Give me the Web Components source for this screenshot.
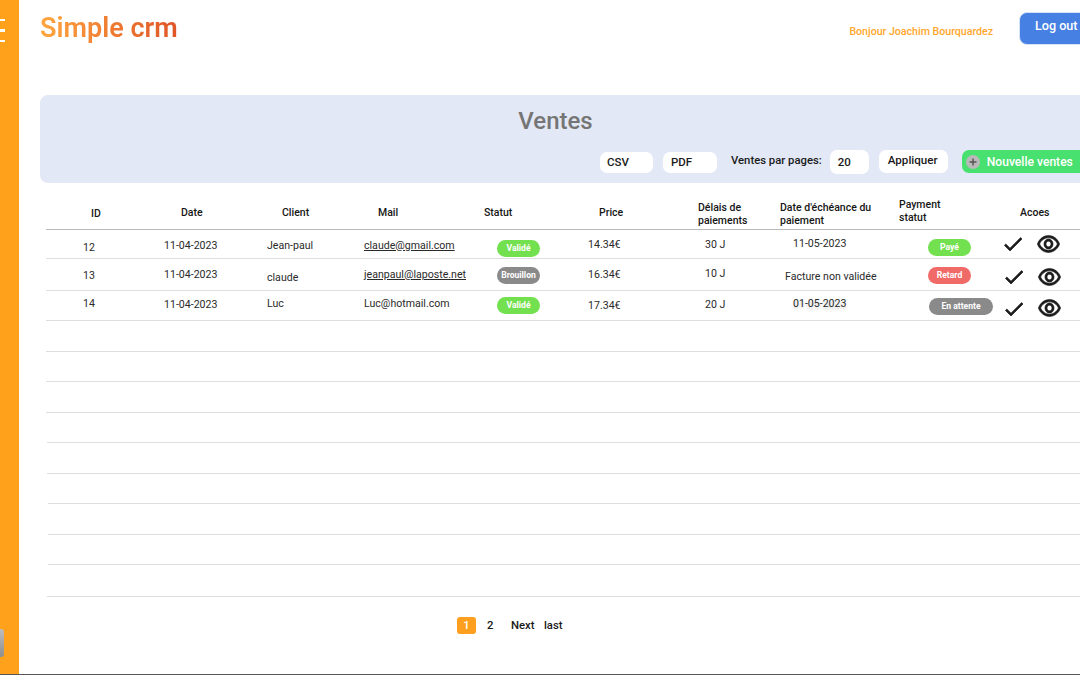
<!DOCTYPE html>
<html lang="fr">
<head>
<meta charset="utf-8">
<title>Simple crm</title>
<style>
  html, body { margin: 0; height: 100%; overflow: hidden; background: #fff; }
  body { font-family: Roboto, "Liberation Sans", sans-serif; color: #1f1f1f; }
</style>
</head>
<body>
<crm-app>
  <crm-header slot="header" user="Bonjour Joachim Bourquardez"></crm-header>
  <crm-toolbar slot="toolbar" title="Ventes"></crm-toolbar>
  <crm-table slot="table"></crm-table>
  <crm-pagination slot="pager"></crm-pagination>
</crm-app>

<script>
// App shell: orange rail on the left, content on the right
class CrmApp extends HTMLElement {
  constructor() {
    super();
    this.attachShadow({ mode: "open" }).innerHTML = `
      <style>
        :host { display: flex; width: 1080px; height: 675px; position: relative; overflow: hidden; box-sizing: border-box; border-bottom: 1px solid #555; }
        .rail { width: 19px; flex: none; background: #ffa11a; display: flex; flex-direction: column; gap: 8px; padding-top: 19px; box-sizing: border-box; }
        .rail i { display: block; width: 5px; height: 2.4px; background: #fff; }
        .tab { position: absolute; left: 0; top: 629px; width: 4px; height: 28px; border-radius: 0 3px 3px 0; background: linear-gradient(#bdbdbd, #8f8f8f); }
        main { width: 1061px; flex: none; padding-left: 21px; box-sizing: border-box; display: flex; flex-direction: column; }
      </style>
      <div class="rail"><i></i><i></i><i></i></div>
      <div class="tab"></div>
      <main>
        <slot name="header"></slot>
        <slot name="toolbar"></slot>
        <slot name="table"></slot>
        <slot name="pager"></slot>
      </main>`;
  }
}

class CrmHeader extends HTMLElement {
  constructor() {
    super();
    this.attachShadow({ mode: "open" });
  }
  connectedCallback() {
    this.shadowRoot.innerHTML = `
      <style>
        :host { display: flex; height: 95px; width: 1049px; box-sizing: border-box; padding-top: 12px; align-items: flex-start; }
        h1 { margin: 0; font-size: 27px; line-height: 32px; font-weight: 600; background: linear-gradient(90deg, #ffa63f, #df5527); -webkit-background-clip: text; background-clip: text; color: transparent; }
        .hello { margin-left: auto; margin-top: 13px; font-size: 10.6px; line-height: 13px; font-weight: 500; color: #ffa62b; }
        button { margin-left: 26px; width: 70px; height: 33px; border: 1px solid #d6e2f7; border-radius: 8px; background: #4680e2; color: #fff; font: 500 12.6px/1 Roboto, sans-serif; text-align: left; padding: 0 0 4px 15px; }
      </style>
      <h1>Simple crm</h1>
      <span class="hello">${this.getAttribute("user")}</span>
      <button>Log out</button>`;
  }
}

class CrmField extends HTMLElement {
  constructor() {
    super();
    this.attachShadow({ mode: "open" }).innerHTML = `
      <style>
        :host { display: flex; align-items: center; box-sizing: border-box; background: #fff; border-radius: 7px; padding: 0 0 2px 7px; font-size: 11.5px; font-weight: 500; color: #1a1a1a; }
      </style>
      <slot></slot>`;
  }
}

class CrmToolbar extends HTMLElement {
  constructor() {
    super();
    this.attachShadow({ mode: "open" });
  }
  connectedCallback() {
    this.shadowRoot.innerHTML = `
      <style>
        :host { display: block; width: 1060px; height: 88px; box-sizing: border-box; background: #e3e8f6; border-radius: 8px; }
        h2 { margin: 0; height: 55px; box-sizing: border-box; padding: 12px 29px 0 0; text-align: center; font-size: 24px; line-height: 28px; font-weight: 500; color: #757575; }
        .tools { display: flex; align-items: flex-start; padding-left: 560px; }
        crm-field { height: 21px; margin-top: 2px; }
        .label { font-size: 11.3px; font-weight: 500; line-height: 14px; margin: 4px 8px 0 14px; white-space: nowrap; color: #1a1a1a; }
        .new { width: 128px; height: 23px; margin-left: 14px; border-radius: 7px; background: #48e06f; color: #fff; display: flex; align-items: center; font-size: 12.1px; font-weight: 500; box-sizing: border-box; padding-left: 4px; }
        .new svg { margin-right: 7px; flex: none; }
      </style>
      <h2>${this.getAttribute("title")}</h2>
      <div class="tools">
        <crm-field style="width:53px">CSV</crm-field>
        <crm-field style="width:54px;margin-left:10px;padding-left:8px">PDF</crm-field>
        <span class="label">Ventes par pages:</span>
        <crm-field style="width:39px;height:24px;margin-top:0;padding:0 0 0 8px">20</crm-field>
        <crm-field style="width:69px;height:23px;margin:0 0 0 10px;padding:0 0 3px 9px;font-size:11.6px">Appliquer</crm-field>
        <div class="new">
          <svg width="14" height="14" viewBox="0 0 14 14"><circle cx="7" cy="7" r="7" fill="#b9b9b9"/><path d="M7 3.5v7M3.5 7h7" stroke="#555" stroke-width="1.5"/></svg>
          Nouvelle ventes
        </div>
      </div>`;
  }
}

class CrmBadge extends HTMLElement {
  constructor() {
    super();
    this.attachShadow({ mode: "open" }).innerHTML = `
      <style>
        :host { display: inline-flex; align-items: center; justify-content: center; height: 17px; border-radius: 9px; color: #fff; background: var(--tone, #888); font-size: 8.6px; font-weight: 700; white-space: nowrap; }
      </style>
      <slot></slot>`;
  }
}

const CHECK = "M9 16.17L4.83 12l-1.42 1.41L9 19 21 7l-1.41-1.41z";
const EYE = "M12 6c3.79 0 7.17 2.13 8.82 5.5C19.17 14.87 15.79 17 12 17s-7.17-2.13-8.82-5.5C4.83 8.13 8.21 6 12 6m0-2C7 4 2.73 7.11 1 11.5 2.73 15.89 7 19 12 19s9.27-3.11 11-7.5C21.27 7.11 17 4 12 4zm0 5c1.38 0 2.5 1.12 2.5 2.5S13.38 14 12 14s-2.5-1.12-2.5-2.5S10.62 9 12 9m0-2c-2.48 0-4.5 2.02-4.5 4.5S9.52 16 12 16s4.5-2.02 4.5-4.5S14.48 7 12 7z";

const checkIcon = `<svg width="24" height="24" viewBox="0 0 24 24" fill="#1c1c1c" stroke="#1c1c1c" stroke-width=".7"><path d="${CHECK}"/></svg>`;
// the reference eye is a bit taller than the stock glyph
const eyeIcon = `<svg width="23" height="18" viewBox="0.6 3.5 22.8 16" preserveAspectRatio="none" fill="#1c1c1c" stroke="#1c1c1c" stroke-width=".6"><path d="${EYE}"/></svg>`;

// columns start at x = 46 on the page
const COLS = "104px 108px 97px 115px 105px 115px 85px 120px 105px 80px";

const HEAD = [
  ["ID", 45, 11], ["Date", 31, 10], ["Client", 24, 10], ["Mail", 23, 10], ["Statut", 14, 10],
  ["Price", 24, 10], ["Délais de<br>paiements", 8, 5], ["Date d'échéance du<br>paiement", 5, 5],
  ["Payment<br>statut", 4, 2], ["Acoes", 20, 10]
];

// cell: [text, padding-left, padding-top, badge tone, badge width]; actions: [padding-left, eye offset, padding-top]
const ROWS = [
  { h: 29, cells: [["12", 37, 11], ["11-04-2023", 14, 9], ["Jean-paul", 9, 9], ["<u>claude@gmail.com</u>", 9, 9],
    ["Validé", 27, 10, "ok", 43], ["14.34€", 13, 8], ["30 J", 15, 8], ["11-05-2023", 18, 7], ["Payé", 33, 9, "ok", 43], [32, 3, 2]] },
  { h: 32, cells: [["13", 37, 10], ["11-04-2023", 14, 9], ["claude", 9, 12], ["<u>jeanpaul@laposte.net</u>", 9, 9],
    ["Brouillon", 27, 8, "off", 43], ["16.34€", 13, 9], ["10 J", 15, 8], ["Facture non validée", 10, 11], ["Retard", 33, 8, "late", 43], [33, 3, 6]] },
  { h: 30, cells: [["14", 37, 6], ["11-04-2023", 14, 7], ["Luc", 9, 6], ["Luc@hotmail.com", 9, 6],
    ["Validé", 27, 6, "ok", 43], ["17.34€", 13, 8], ["20 J", 15, 7], ["<span class=\"soft\">01-05-2023</span>", 18, 6], ["En attente", 34, 7, "off", 64], [33, 2, 6]] }
];

// the empty ruled lines below the data: [row height, left inset]
const EMPTY = [[31, 0], [30, 0], [31, 0], [30, 1], [31, 1], [30, 2], [31, 2], [30, 2], [32, 1]];
const TONES = { ok: "#73e04f", off: "#8a8a8a", late: "#f06a68" };

class CrmTable extends HTMLElement {
  constructor() {
    super();
    this.attachShadow({ mode: "open" });
  }
  connectedCallback() {
    const head = HEAD.map(([t, x, y]) => `<div class="c" style="padding:${y}px 0 0 ${x}px">${t}</div>`).join("");
    const rows = ROWS.map(r => {
      const cells = r.cells.map(c => {
        if (typeof c[0] === "number") {
          return `<div class="c act" style="padding:${c[2]}px 0 0 ${c[0] - 31}px">${checkIcon}<span class="eye" style="margin-top:${c[1]}px">${eyeIcon}</span></div>`;
        }
        const [t, x, y, tone, w] = c;
        const body = tone ? `<crm-badge style="--tone:${TONES[tone]};width:${w}px">${t}</crm-badge>` : t;
        return `<div class="c" style="padding:${y}px 0 0 ${x}px">${body}</div>`;
      }).join("");
      return `<div class="row" style="height:${r.h}px">${cells}</div>`;
    }).join("");
    const empty = EMPTY.map(([h, x]) => `<div class="row" style="height:${h}px;margin-left:${x}px"></div>`).join("");
    this.shadowRoot.innerHTML = `
      <style>
        :host { display: block; width: 1034px; margin: 13px 0 0 6px; font-size: 10.6px; color: #2a2a2a; }
        .row { display: grid; grid-template-columns: ${COLS}; box-sizing: border-box; border-bottom: 1px solid #dedede; }
        .head { height: 34px; border-bottom: 1px solid #bdb8bd; font-size: 10.5px; font-weight: 500; line-height: 12px; color: #161616; }
        .c { white-space: nowrap; line-height: 13px; box-sizing: border-box; min-width: 0; }
        .c u { text-underline-offset: 1px; }
        .soft { text-shadow: 0 2px 3px rgba(0,0,0,.22); }
        .act { display: flex; align-items: flex-start; }
        .eye { margin-left: 12px; }
        svg { display: block; }
      </style>
      <div class="row head">${head}</div>
      ${rows}
      ${empty}`;
  }
}

class CrmPagination extends HTMLElement {
  constructor() {
    super();
    this.attachShadow({ mode: "open" }).innerHTML = `
      <style>
        :host { display: flex; align-items: center; padding: 20px 0 0 417px; font-size: 11.3px; font-weight: 500; color: #1a1a1a; line-height: 17px; }
        .on { width: 19px; height: 17px; border-radius: 3px; background: #ff9f1f; color: #fff; text-align: center; }
      </style>
      <span class="on">1</span>
      <span style="margin-left:11px">2</span>
      <span style="margin-left:17.5px">Next</span>
      <span style="margin-left:9.5px">last</span>`;
  }
}

customElements.define("crm-app", CrmApp);
customElements.define("crm-header", CrmHeader);
customElements.define("crm-field", CrmField);
customElements.define("crm-toolbar", CrmToolbar);
customElements.define("crm-badge", CrmBadge);
customElements.define("crm-table", CrmTable);
customElements.define("crm-pagination", CrmPagination);
</script>
</body>
</html>
